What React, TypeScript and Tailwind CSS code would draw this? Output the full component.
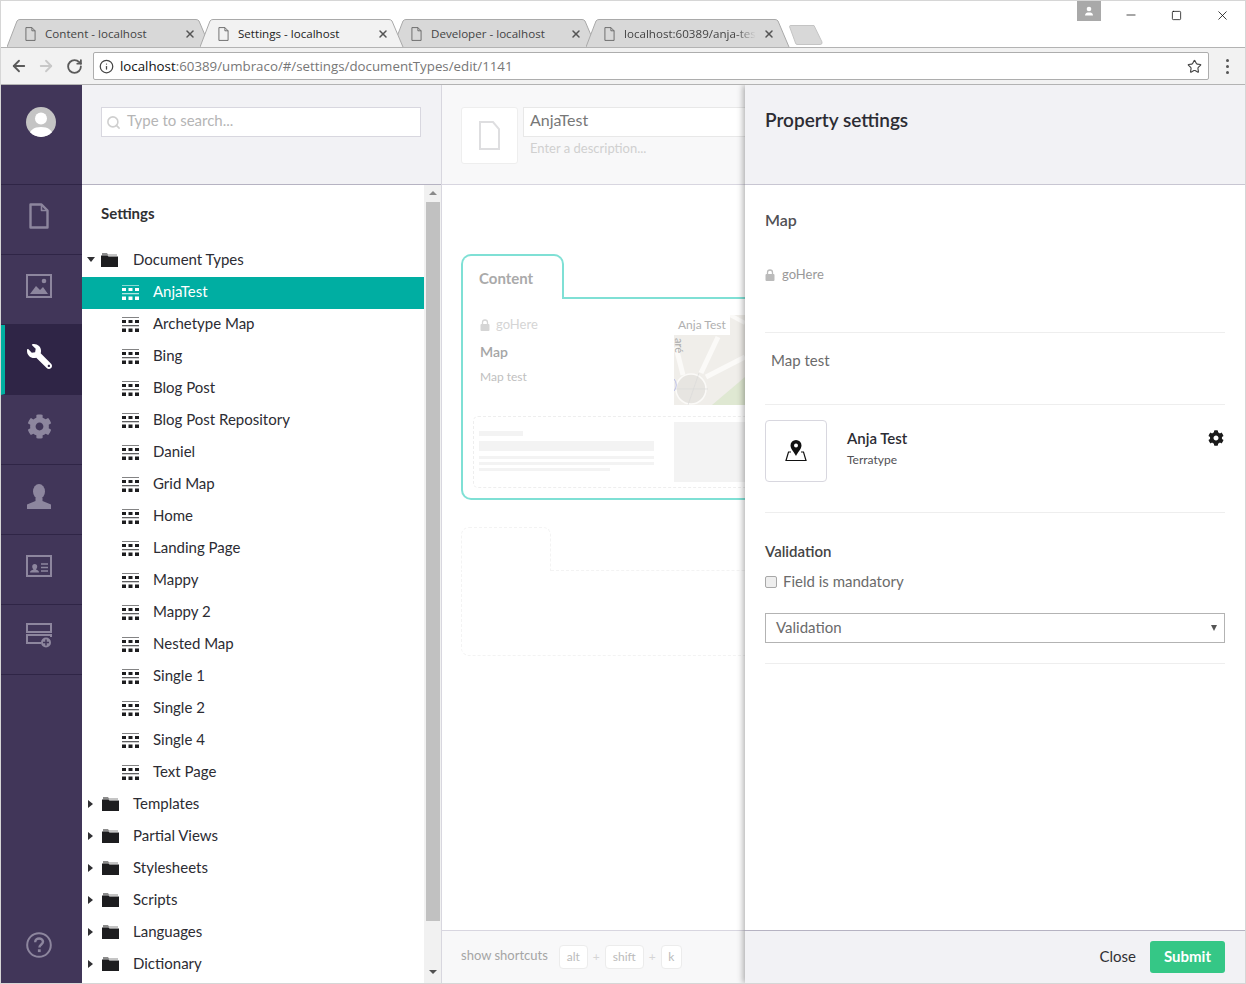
import { ArrowLeft, ArrowRight, RotateCw, Info, Star, X, Minus, Square, Search } from "lucide-react";
import { FaCog, FaWrench } from "react-icons/fa";

const docTypes = [
  "AnjaTest", "Archetype Map", "Bing", "Blog Post", "Blog Post Repository", "Daniel", "Grid Map", "Home",
  "Landing Page", "Mappy", "Mappy 2", "Nested Map", "Single 1", "Single 2", "Single 4", "Text Page",
];
const folders = ["Templates", "Partial Views", "Stylesheets", "Scripts", "Languages", "Dictionary"];

function PageIcon({ className }: { className?: string }) {
  return (
    <svg viewBox="0 0 12 15" className={className} fill="none" stroke="currentColor">
      <path d="M1 .5h6.5L11 4v10.5H1z" />
      <path d="M7.5 .5V4H11" />
    </svg>
  );
}

function LockIcon({ className }: { className?: string }) {
  return (
    <svg viewBox="0 0 10 12" className={className}>
      <path d="M2.500 5V3.500a2.500 2.500 0 0 1 5 0V5" fill="none" stroke="currentColor" strokeWidth="1.300" />
      <rect x="0.500" y="5" width="9" height="7" rx="1" fill="currentColor" />
    </svg>
  );
}

function ChromeTab({ title, active, fade }: { title: string; active?: boolean; fade?: boolean }) {
  return (
    <div className={`relative h-[28px] w-[204px] -mr-[11px] shrink-0 ${active ? "z-10" : ""}`}>
      <svg viewBox="0 0 204 28" className="absolute inset-0 h-full w-full">
        <path d="M0 28 L10 2 Q11 .5 13 .5 H189 Q191 .5 192 2 L203 28" fill={active ? "#f2f2f2" : "#d8d8d8"} stroke="#a9a9a9" />
      </svg>
      <div className={`relative flex h-full items-center pl-[18px] pr-[15px] pt-[2px] text-[11.6px] ${active ? "text-[#222]" : "text-[#444]"}`}>
        <PageIcon className="h-[14px] w-[11px] shrink-0 text-[#666]" />
        <span className="ml-[9px] w-[132px] overflow-hidden whitespace-nowrap" style={fade ? { maskImage: "linear-gradient(90deg,#000 85%,transparent)" } : undefined}>{title}</span>
        <X className="ml-auto h-[12px] w-[12px] text-[#555]" strokeWidth={3} />
      </div>
    </div>
  );
}

function TitleBar() {
  return (
    <div className="flex h-[46px] bg-white">
      <div className="flex items-end pl-[6px] pt-[18px]">
        <ChromeTab title="Content - localhost" />
        <ChromeTab title="Settings - localhost" active />
        <ChromeTab title="Developer - localhost" />
        <ChromeTab title="localhost:60389/anja-test" fade />
        <svg viewBox="0 0 34 20" className="mb-[2px] ml-[10px] h-[20px] w-[34px]">
          <path d="M.5 1.5 Q.5 .5 2 .5 H25 L33 17 Q33.5 19.5 31 19.5 H8 Q7 19.5 6.5 18z" fill="#d8d8d8" stroke="#c4c4c4" />
        </svg>
      </div>
      <div className="ml-auto flex items-start pr-[7px]">
        <div className="flex h-[20px] w-[24px] items-center justify-center bg-[#a9a9a9]">
          <svg viewBox="0 0 10 10" className="h-[10px] w-[10px]" fill="#fff">
            <circle cx="5" cy="3" r="2.3" />
            <path d="M1 9.5c0-2.5 2-3 4-3s4 .5 4 3z" />
          </svg>
        </div>
        <div className="flex h-[28px] w-[46px] items-center justify-center pl-[14px]"><Minus className="h-[14px] w-[14px] text-black" strokeWidth={1.2} /></div>
        <div className="flex h-[28px] w-[45px] items-center justify-center pl-[14px]"><Square className="h-[11px] w-[11px] text-black" strokeWidth={1.6} absoluteStrokeWidth /></div>
        <div className="flex h-[28px] w-[46px] items-center justify-center pl-[14px]"><X className="h-[15px] w-[15px] text-black" strokeWidth={1.2} /></div>
      </div>
    </div>
  );
}

function Toolbar() {
  return (
    <div className="flex h-[38px] items-center border-t border-b border-[#b3b3b3] bg-[#f2f2f2]">
      <ArrowLeft className="ml-[9px] h-[18px] w-[18px] text-[#5a5a5a]" strokeWidth={2.4} />
      <ArrowRight className="ml-[9px] h-[18px] w-[18px] text-[#c8c8c8]" strokeWidth={2.4} />
      <RotateCw className="ml-[11px] h-[17px] w-[17px] text-[#5a5a5a]" strokeWidth={2.6} />
      <div className="ml-[10px] flex h-[28px] w-[1116px] items-center rounded-[2px] border border-[#adadad] bg-white pl-[5px] pr-[5px] pt-[1px] font-['Open_Sans',sans-serif] text-[13.3px]">
        <Info className="h-[15px] w-[15px] text-[#444]" strokeWidth={2} />
        <span className="ml-[6px] text-[#111]">localhost</span>
        <span className="text-[#777]">:60389/umbraco/#/settings/documentTypes/edit/1141</span>
        <Star className="ml-auto mr-[1px] h-[15px] w-[15px] text-[#444]" strokeWidth={1.8} />
      </div>
      <div className="ml-[17px] flex flex-col gap-[3px]">
        <span className="h-[3px] w-[3px] rounded-full bg-[#555]" />
        <span className="h-[3px] w-[3px] rounded-full bg-[#555]" />
        <span className="h-[3px] w-[3px] rounded-full bg-[#555]" />
      </div>
    </div>
  );
}

function SectionRow({ active, children }: { active?: boolean; children: React.ReactNode }) {
  return (
    <div className={`flex h-[70px] items-center justify-center border-b border-[#2f2546] pb-[7px] ${active ? "border-l-[4px] border-l-[#00b0a0] bg-[#2f2546] pr-[9px] text-white" : "pr-[5px] text-[#8d869e]"}`}>
      {children}
    </div>
  );
}

function Sidebar() {
  return (
    <div className="flex w-[81px] shrink-0 flex-col bg-[#413659]">
      <div className="flex h-[100px] justify-center border-b border-[#2f2546] pr-[1px] pt-[22px]">
        <svg viewBox="0 0 30 30" className="h-[30px] w-[30px]">
          <defs><clipPath id="av"><circle cx="15" cy="15" r="15" /></clipPath></defs>
          <circle cx="15" cy="15" r="15" fill="#c4c4c4" />
          <g clipPath="url(#av)" fill="#fff">
            <circle cx="15" cy="11.5" r="6" />
            <path d="M3 30c0-7 5-10 12-10s12 3 12 10z" />
          </g>
        </svg>
      </div>
      <SectionRow>
        <svg viewBox="0 0 20 26" className="h-[26px] w-[20px]" fill="none" stroke="currentColor" strokeWidth="2.4" strokeLinejoin="round">
          <path d="M1.5 1.5h11l6 6v17h-17z" />
          <path d="M12.5 1.5v6h6" strokeWidth="1.6" />
        </svg>
      </SectionRow>
      <SectionRow>
        <svg viewBox="0 0 26 24" className="h-[24px] w-[26px]">
          <rect x="1" y="1" width="24" height="22" fill="none" stroke="currentColor" strokeWidth="2" />
          <path d="M4 20l6-8 4 4 3-3 5 7z" fill="currentColor" />
          <circle cx="18" cy="7" r="2.3" fill="currentColor" />
        </svg>
      </SectionRow>
      <SectionRow active><FaWrench className="h-[25px] w-[25px] -scale-x-100" /></SectionRow>
      <SectionRow><FaCog className="h-[25px] w-[25px]" /></SectionRow>
      <SectionRow>
        <svg viewBox="0 0 26 25" className="h-[25px] w-[26px]" fill="currentColor">
          <ellipse cx="13" cy="7.5" rx="6" ry="7.5" />
          <path d="M9.5 14v3L1 20.5V25h24v-4.5L16.500 17v-3z" />
        </svg>
      </SectionRow>
      <SectionRow>
        <svg viewBox="0 0 26 22" className="h-[22px] w-[26px]">
          <rect x="1" y="1" width="24" height="20" fill="none" stroke="currentColor" strokeWidth="2" />
          <path d="M4 17.500c0-2 2-2.500 3.500-3-1-1-1.300-2-1.300-3a2.500 2.500 0 0 1 5 0c0 1-.3 2-1.300 3 1.500.5 3.100 1 3.100 3z" fill="currentColor" />
          <path d="M15 9h7M15 12.500h7M15 16h7" stroke="currentColor" strokeWidth="1.5" />
        </svg>
      </SectionRow>
      <SectionRow>
        <svg viewBox="0 0 26 26" className="h-[26px] w-[26px]">
          <rect x="1" y="1" width="24" height="8" fill="none" stroke="currentColor" strokeWidth="2" />
          <path d="M15 20H1v-8h24v2" fill="none" stroke="currentColor" strokeWidth="2" />
          <circle cx="20" cy="19.500" r="5" fill="currentColor" />
          <path d="M20 16.500v6M17 19.500h6" stroke="#413659" strokeWidth="1.500" />
        </svg>
      </SectionRow>
      <div className="mt-auto flex justify-center pb-[25px] pr-[5px]">
        <svg viewBox="0 0 26 26" className="h-[26px] w-[26px] text-[#8d869e]" fill="none" stroke="currentColor">
          <circle cx="13" cy="13" r="11.800" strokeWidth="2" />
          <path d="M9.200 10.200c0-2.400 1.800-3.700 3.900-3.700s3.900 1.300 3.900 3.300c0 2.700-3.600 2.700-3.600 5.700" strokeWidth="2.400" />
          <rect x="11.900" y="17.300" width="2.800" height="2.800" fill="currentColor" stroke="none" />
        </svg>
      </div>
    </div>
  );
}

function FolderIcon() {
  return (
    <svg viewBox="0 0 17 15" className="h-[15px] w-[17px] shrink-0">
      <path d="M1 1h5l1 1.500H16v1H1z" fill="#8c8c8c" />
      <path d="M0 3.500h6.500l1 1H17V15H0z" fill="#1d1d1f" />
    </svg>
  );
}

function DocTypeIcon({ active }: { active?: boolean }) {
  const c = active ? "#ffffff" : "#1d1d1f";
  return (
    <svg viewBox="0 0 17 15" className="mt-[2px] h-[15px] w-[17px] shrink-0" fill={c}>
      <rect x="0" y="0" width="17" height="1" opacity=".55" />
      <rect x="0" y="3" width="4" height="3" />
      <rect x="6.500" y="3" width="4" height="3" />
      <rect x="13" y="3" width="4" height="3" />
      <rect x="0" y="8" width="17" height="1.300" opacity=".7" />
      <rect x="0" y="11.500" width="4" height="3.500" />
      <rect x="6.500" y="11.500" width="4" height="3.500" />
      <rect x="13" y="11.500" width="4" height="3.500" />
    </svg>
  );
}

function TreePanel() {
  return (
    <div className="flex w-[360px] shrink-0 flex-col border-r border-[#d8d7df] font-['Lato',sans-serif]">
      <div className="h-[100px] shrink-0 border-b border-[#b6b3c2] bg-[#f2f2f5] pl-[19px] pr-[20px] pt-[22px]">
        <div className="flex h-[30px] items-center border border-[#d8d7df] bg-white pb-[4px] pl-[4px] text-[15px] text-[#b5b5b5]">
          <Search className="mt-[5px] h-[15px] w-[15px] text-[#cfcfcf]" strokeWidth={2.5} />
          <span className="ml-[6px]">Type to search...</span>
        </div>
      </div>
      <div className="flex min-h-0 flex-1">
        <div className="w-[342px] overflow-hidden bg-white">
          <div className="flex h-[60px] items-center pb-[3px] pl-[19px] text-[15px] font-bold text-[#303033]">Settings</div>
          <div className="flex h-[32px] items-center pb-[3px] text-[15px]">
            <span className="ml-[5px] h-0 w-0 border-x-[4px] border-t-[5px] border-x-transparent border-t-[#303033]" />
            <span className="ml-[6px]"><FolderIcon /></span>
            <span className="ml-[15px] text-[#2c2c33]">Document Types</span>
          </div>
          {docTypes.map((name, i) => (
            <div key={name} className={`flex h-[32px] items-center pb-[3px] pl-[40px] text-[15px] ${i === 0 ? "bg-[#00aea2] text-white" : "text-[#2c2c33]"}`}>
              <DocTypeIcon active={i === 0} />
              <span className="ml-[14px]">{name}</span>
            </div>
          ))}
          {folders.map((name) => (
            <div key={name} className="flex h-[32px] items-center pb-[3px] text-[15px] text-[#2c2c33]">
              <span className="ml-[6px] h-0 w-0 border-y-[4px] border-l-[5px] border-y-transparent border-l-[#303033]" />
              <span className="ml-[9px]"><FolderIcon /></span>
              <span className="ml-[14px]">{name}</span>
            </div>
          ))}
        </div>
        <div className="flex w-[17px] flex-col items-center bg-[#f1f1f1]">
          <span className="mt-[6px] h-0 w-0 border-x-[4px] border-b-[4px] border-x-transparent border-b-[#8a8a8a]" />
          <div className="mt-[7px] h-[719px] w-[14px] bg-[#c1c1c1]" />
          <span className="mt-[49px] h-0 w-0 border-x-[4px] border-t-[4px] border-x-transparent border-t-[#505050]" />
        </div>
      </div>
    </div>
  );
}

function MapPreview() {
  return (
    <svg viewBox="0 0 71 90" className="h-[90px] w-[71px]">
      <rect width="71" height="90" fill="#f0eeea" />
      <path d="M38 90L71 62V90z" fill="#dfe8d2" />
      <path d="M2 32L9 60M44 22L27 58M32 62L71 42" stroke="#fbfaf8" strokeWidth="5" fill="none" />
      <path d="M56 0L71 8" stroke="#fbfaf8" strokeWidth="4" fill="none" />
      <circle cx="17" cy="74" r="15" fill="#e7e5e1" stroke="#fbfaf8" strokeWidth="1.500" />
      <path d="M0 74h34M25 58L14 90" stroke="#d8d8d8" strokeWidth=".6" />
      <path d="M0 64a9 9 0 0 1 0 12" stroke="#b9bde6" fill="none" />
      <text x="1" y="23" fontSize="11" fill="#aaa" transform="rotate(90 1 23)">aré</text>
    </svg>
  );
}

function ContentBehind() {
  return (
    <div className="absolute inset-0 flex flex-col font-['Lato',sans-serif]">
      <div className="flex h-[100px] shrink-0 border-b border-[#d8d6e0] bg-[#f8f8f9] pl-[19px] pt-[22px]">
        <div className="flex h-[57px] w-[57px] items-center justify-center rounded-[3px] border border-[#eeeeee] bg-white">
          <svg viewBox="0 0 21 29" className="h-[29px] w-[21px] text-[#dedee0]" fill="none" stroke="currentColor" strokeWidth="2">
            <path d="M1 1h13l6 7v20H1z" />
          </svg>
        </div>
        <div className="ml-[5px] flex-1">
          <div className="flex h-[30px] items-center border border-[#e8e8e8] bg-white pb-[4px] pl-[6px] text-[16px] text-[#777]">AnjaTest</div>
          <div className="mt-[1px] pl-[7px] text-[13px] leading-[20px] text-[#d0d0d0]">Enter a description...</div>
        </div>
      </div>
      <div className="flex-1 overflow-hidden bg-white pl-[19px] pt-[69px]">
        <div className="w-[780px]">
          <div className="flex">
            <div className="h-[45px] w-[103px] rounded-t-[10px] border-2 border-b-0 border-[#7fe0d5] pl-[16px] pt-[13px] text-[15px] font-bold leading-[18px] text-[#aaaaaa]">Content</div>
            <div className="flex-1 border-b-2 border-[#7fe0d5]" />
          </div>
          <div className="h-[201px] rounded-b-[10px] border-2 border-t-0 border-[#7fe0d5] pl-[10px] pt-[16px]">
            <div className="flex h-[90px]">
              <div className="w-[201px] pl-[7px]">
                <div className="flex h-[20px] items-center text-[13px] text-[#d5d5d5]">
                  <LockIcon className="h-[12px] w-[10px]" />
                  <span className="ml-[6px]">goHere</span>
                </div>
                <div className="mt-[7px] text-[14px] font-semibold leading-[20px] text-[#a5a5a5]">Map</div>
                <div className="mt-[6px] text-[12px] leading-[18px] text-[#c0c0c0]">Map test</div>
              </div>
              <div className="relative">
                <MapPreview />
                <div className="absolute left-0 top-0 bg-white px-[4px] text-[12px] leading-[20px] text-[#b0b0b0]">Anja Test</div>
              </div>
            </div>
            <div className="mt-[11px] flex h-[72px] w-[740px] rounded-[5px] border border-dashed border-[#eeeeee] pl-[5px] pt-[5px]">
              <div className="w-[175px] pt-[9px]">
                <div className="h-[5px] w-[44px] bg-[#f3f3f3]" />
                <div className="mt-[5px] h-[10px] bg-[#f3f3f3]" />
                <div className="mt-[5px] h-[3px] bg-[#f3f3f3]" />
                <div className="mt-[3px] h-[3px] bg-[#f3f3f3]" />
                <div className="mt-[3px] h-[3px] w-[131px] bg-[#f3f3f3]" />
              </div>
              <div className="ml-[20px] h-[60px] w-[80px] bg-[#f3f3f3]" />
            </div>
          </div>
          <div className="mt-[27px] flex">
            <div className="h-[44px] w-[90px] rounded-t-[8px] border border-b-0 border-dashed border-[#f3f3f3]" />
            <div className="flex-1 border-b border-dashed border-[#f3f3f3]" />
          </div>
          <div className="h-[85px] rounded-b-[8px] border border-t-0 border-dashed border-[#f3f3f3]" />
        </div>
      </div>
      <div className="flex h-[53px] shrink-0 items-center border-t border-[#d8d6e0] bg-[#f8f8f9] pl-[19px] text-[12px]">
        <span className="pb-[2px] text-[13px] text-[#a5a5a5]">show shortcuts</span>
        <span className="ml-[11px] flex h-[24px] w-[29px] items-center justify-center rounded-[4px] border border-[#ececec] bg-white text-[#bbbbbb]">alt</span>
        <span className="w-[17px] text-center text-[#d5d5d5]">+</span>
        <span className="flex h-[24px] w-[39px] items-center justify-center rounded-[4px] border border-[#ececec] bg-white text-[#bbbbbb]">shift</span>
        <span className="w-[17px] text-center text-[#d5d5d5]">+</span>
        <span className="flex h-[24px] w-[21px] items-center justify-center rounded-[4px] border border-[#ececec] bg-white text-[#bbbbbb]">k</span>
      </div>
    </div>
  );
}

function PropertyPanel() {
  return (
    <div className="absolute bottom-0 right-0 top-0 flex w-[500px] flex-col bg-white font-['Lato',sans-serif] shadow-[-2px_0_6px_rgba(0,0,0,0.3)]">
      <div className="h-[100px] shrink-0 border-b border-[#c8c6d2] bg-[#f2f2f5] pl-[20px] pt-[22px] text-[19px] font-semibold leading-[26px] text-[#2c2c33]">Property settings</div>
      <div className="flex-1 px-[20px]">
        <div className="mt-[25px] text-[16px] font-semibold leading-[20px] text-[#515054]">Map</div>
        <div className="mt-[35px] flex h-[20px] items-center text-[13px] text-[#999999]">
          <LockIcon className="h-[12px] w-[10px] text-[#bbbbbb]" />
          <span className="ml-[7px]">goHere</span>
        </div>
        <div className="mt-[47px] border-t border-[#eeeeee]" />
        <div className="mt-[17px] pl-[6px] text-[15px] leading-[20px] text-[#6b6b6b]">Map test</div>
        <div className="mt-[34px] border-t border-[#eeeeee]" />
        <div className="mt-[15px] flex">
          <div className="flex h-[62px] w-[62px] shrink-0 items-center justify-center rounded-[4px] border border-[#d8d7df]">
            <svg viewBox="0 0 22 22" className="h-[22px] w-[22px]">
              <path d="M11 0a5.500 5.500 0 0 0-5.500 5.500C5.500 9 9.500 12.500 11 16c1.500-3.500 5.500-7 5.500-10.500A5.500 5.500 0 0 0 11 0z" fill="#111" />
              <circle cx="11" cy="5.500" r="2" fill="#fff" />
              <path d="M6 12H3.500L1 20.500h20L18.500 12H16" fill="none" stroke="#111" strokeWidth="1.200" />
            </svg>
          </div>
          <div className="ml-[20px] flex-1 pt-[8px]">
            <div className="text-[15px] font-semibold leading-[20px] text-[#2c2c33]">Anja Test</div>
            <div className="mt-[3px] text-[12px] leading-[18px] text-[#515054]">Terratype</div>
          </div>
          <FaCog className="mr-[1px] mt-[10px] h-[16px] w-[16px] text-[#1b1b1b]" />
        </div>
        <div className="mt-[30px] border-t border-[#eeeeee]" />
        <div className="mt-[28px] text-[15px] font-semibold leading-[20px] text-[#444444]">Validation</div>
        <div className="mt-[10px] flex h-[20px] items-center text-[15px] text-[#6b6b6b]">
          <span className="mt-[2px] h-[12px] w-[12px] rounded-[2px] border border-[#a8a8a8] bg-[#eeeeee]" />
          <span className="ml-[6px]">Field is mandatory</span>
        </div>
        <div className="mt-[22px] flex h-[30px] items-center border border-[#b3b3b3] pb-[2px] pl-[10px] pr-[7px] text-[15px] text-[#6b6b6b]">
          Validation
          <span className="ml-auto mt-[2px] h-0 w-0 border-x-[3px] border-t-[6px] border-x-transparent border-t-[#555555]" />
        </div>
        <div className="mt-[20px] border-t border-[#eeeeee]" />
      </div>
      <div className="flex h-[53px] shrink-0 items-center justify-end border-t border-[#b6b3c2] bg-[#f2f2f5] pr-[20px]">
        <span className="pb-[2px] text-[15px] text-[#303033]">Close</span>
        <span className="ml-[14px] flex h-[32px] w-[75px] items-center justify-center rounded-[3px] bg-[#35c786] pb-[2px] text-[15px] font-bold text-white">Submit</span>
      </div>
    </div>
  );
}

export default function App() {
  return (
    <div className="flex h-[984px] w-[1246px] flex-col overflow-hidden border border-[#d6d6d6] bg-white font-['Open_Sans',sans-serif]">
      <TitleBar />
      <Toolbar />
      <div className="flex min-h-0 flex-1">
        <Sidebar />
        <TreePanel />
        <div className="relative flex-1 overflow-hidden">
          <ContentBehind />
          <PropertyPanel />
        </div>
      </div>
    </div>
  );
}
